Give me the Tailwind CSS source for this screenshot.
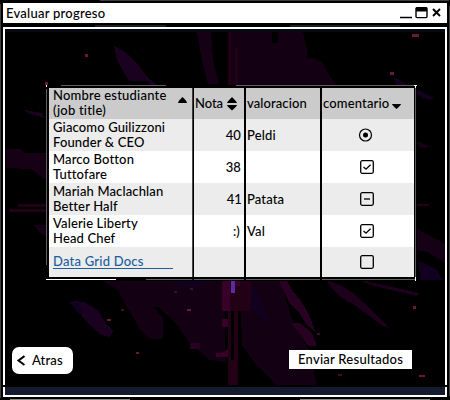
<!DOCTYPE html>
<html lang="es"><head><meta charset="utf-8"><title>Evaluar progreso</title><script src="https://cdn.jsdelivr.net/npm/@tailwindcss/browser@4"></script></head>
<body class="w-[450px] h-[400px] overflow-hidden bg-black text-black font-['Lato','Liberation_Sans',sans-serif] font-medium text-[13px] leading-[15px] tracking-[0.14px]">
<div class="relative w-[450px] h-[400px] pt-[3px] pl-[3px] flex flex-col">
<svg class="absolute inset-0" width="450" height="400" fill="none" stroke="#3c3c3c"><path d="M.5 4V398M100 .5H449M449.5 6V396M95 26H166M290 26H400"/><path d="M10 399.5H130M300 399.5H430" stroke="#888"/></svg>
<header class="w-[444px] h-5 bg-white flex items-center pl-[3px] pr-[4px] shrink-0">
<h1 class="tracking-[0.25px]">Evaluar progreso</h1>
<svg class="ml-auto" width="44" height="16" viewBox="0 0 44 16" fill="none" stroke="#000"><path d="M1 12.5H13" stroke-width="1.5"/><rect x="17" y="2.6" width="11" height="10" rx="1" stroke-width="1.4"/><path d="M17 4.5H28" stroke-width="4"/><path d="M34 4L41 11M41 4L34 11" stroke-width="1.9"/></svg>
</header>
<main class="relative mt-1 w-[444px] h-[370px] border-2 border-white bg-black shrink-0 flex flex-col">
<svg class="absolute inset-0" width="440" height="366" viewBox="5 29 440 366" shape-rendering="crispEdges">
<path fill="#06090f" d="M5 29H445V32H5Z"/>
<path fill="#130012" d="M228 32H272V43H278V32H303L307 50V58H315L323 63L329 75L337 86H228ZM275 53V49H279V53ZM98 278L118 290L126 306L134 318L140 330L150 339H163V318L154 307L158 307L175 322L190 344L210 360L225 362V278ZM240 275H284V293L294 325L309 350L317 386H278L257 366L242 345Z"/>
<path fill="#150015" d="M6 149H21L24 153H48V182L31 169L6 168ZM34 225H48V237L40 233ZM416 141L432 147L420 148ZM416 228L445 244V263L428 252L416 250ZM197 32H211L213 60L219 84H208L203 66Z"/>
<path fill="#1b0120" d="M114 46L127 53L140 67L148 78L158 85H150L147 81H129L117 60ZM69 303L74 301L84 302L98 310L105 322L113 331L110 337L99 334L82 316ZM25 110L42 113L45 118L27 113Z"/>
<path fill="#11001f" d="M165 278H203V286H180ZM251 285L260 298L271 326L252 309ZM69 302L78 303L84 312L79 314ZM419 261L436 269L443 280H420Z"/>
<path fill="#280022" d="M279 281L287 281L293 291L301 301L308 313L313 325L316 332L307 325L300 314L290 304ZM291 323H300L312 333L317 346H308L301 336ZM340 296L348 292L355 300L348 302ZM190 343H200V349H190Z"/>
<path fill="#1d001c" d="M325 279L340 285L353 293L372 310L389 328L383 326L356 306L339 296L331 287ZM356 279L384 285L419 293L416 296L371 285Z"/>
<path fill="#160020" d="M394 77L409 85L424 93L434 98L429 100L397 86Z"/>
<path fill="#220015" d="M228 32H231V86H228ZM235 48H238V86H235ZM225 280H251V311H225ZM228 305H231V386H228ZM234 305H238V386H234ZM228 360H238V386H228ZM18 204H48V207H18ZM9 209H48V212H9ZM416 204H429V206H416Z"/>
<path fill="#380028" d="M222 280H230V311H222ZM222 319H228V327H222ZM216 353H222L228 349V357H216ZM234 280H240V286H234Z"/>
<path fill="#582ba0" d="M231 280H235V293H231Z"/>
<path fill="#6d163e" d="M85 54H88V57H85ZM412 34H419V37H412ZM390 72H394V75H390ZM45 82H48V85H45ZM107 319H111V321H107ZM136 352H139V354H136ZM187 309H191V311H187ZM413 306H416V309H413ZM419 375H425V377H419Z"/>
<path fill="#3d0c2c" d="M121 309H124V311H121ZM174 291H177V293H174ZM190 288H193V290H190ZM317 333H320V335H317ZM338 374H342V376H338Z"/>
<path fill="#050008" d="M225 331H228V336H225ZM231 335H234V345H231Z"/>
</svg>
<section class="relative mt-[57px] ml-[42px] w-[369px] h-[194px]">
<svg class="absolute -left-px -top-px" width="371" height="196" fill="none"><path fill="#000" d="M0 0H371V196H0Z"/><path d="M.5 4V180M15 .5H120M190 .5H369M369.5 3V193M100 194.5H369" stroke="#777" stroke-width=".8"/><path d="M.5 0V2M0 194.5H70M368 .5H371M369.5 0V3M369.5 192V196" stroke="#fff"/></svg>
<div class="relative pl-[2px] pt-[2px] w-[367px] grid grid-cols-[145px_52px_76px_92px] grid-rows-[31px_32px_32px_32px_32px_30px]">
<div class="bg-[#cbcbcb] pl-1 pr-[7px] flex items-center justify-between"><div class="pb-[2px] tracking-[0.2px]">Nombre estudiante<br>(job title)</div><svg class="mb-1" width="9" height="14"><path d="M0 8Q0 6 4.500 2Q9 6 9 8Z"/></svg></div>
<div class="bg-[#cbcbcb] pl-px flex items-center gap-1"><span class="tracking-[-0.05px]">Nota</span><svg width="10" height="16"><path d="M0 7Q0 6 5 1Q10 6 10 7ZM0 9H10Q10 10 5 14.500Q0 10 0 9Z"/></svg></div>
<div class="bg-[#cbcbcb] pl-px flex items-center tracking-[0.1px]">valoracion</div>
<div class="bg-[#cbcbcb] pl-px flex items-center gap-[3px]"><span class="tracking-[0.15px]">comentario</span><svg width="9" height="14"><path d="M0 7H9Q9 8 4.500 12Q0 8 0 7Z"/></svg></div>

<div class="bg-[#ececec] pl-1 flex items-center">Giacomo Guilizzoni<br>Founder &amp; CEO</div><div class="bg-[#ececec] pr-[5px] flex items-center justify-end">40</div><div class="bg-[#ececec] pl-px flex items-center">Peldi</div>
<div class="bg-[#ececec] pl-[36px] flex items-center"><svg width="16" height="16" fill="none" stroke="#000" stroke-width="1.2"><circle cx="7.500" cy="8" r="6"/><circle cx="7.500" cy="8" r="2.500" fill="#000" stroke="none"/></svg></div>

<div class="bg-white pl-1 flex items-center">Marco Botton<br>Tuttofare</div><div class="bg-white pr-[5px] flex items-center justify-end">38</div><div class="bg-white"></div>
<div class="bg-white pl-[37px] flex items-center"><svg width="16" height="16" fill="none" stroke="#000" stroke-width="1.3"><rect x="1.700" y="1.700" width="12.600" height="12.600" rx="1.500"/><path d="M4.500 8L7 10.200L11.500 5.700"/></svg></div>

<div class="bg-[#ececec] pl-1 flex items-center">Mariah Maclachlan<br>Better Half</div><div class="bg-[#ececec] pr-1 flex items-center justify-end">41</div><div class="bg-[#ececec] pl-px flex items-center">Patata</div>
<div class="bg-[#ececec] pl-[37px] flex items-center"><svg width="16" height="16" fill="none" stroke="#000" stroke-width="1.3"><rect x="1.700" y="1.700" width="12.600" height="12.600" rx="1.500"/><path d="M5 8H11"/></svg></div>

<div class="bg-white pl-1 flex items-center">Valerie Liberty<br>Head Chef</div><div class="bg-white pr-[6px] flex items-center justify-end">:)</div><div class="bg-white pl-px flex items-center">Val</div>
<div class="bg-white pl-[37px] flex items-center"><svg width="16" height="16" fill="none" stroke="#000" stroke-width="1.3"><rect x="1.700" y="1.700" width="12.600" height="12.600" rx="1.500"/><path d="M4.500 8L7 10.200L11.500 5.700"/></svg></div>

<div class="bg-[#ececec] pl-1 flex items-center"><a class="block w-[120px] h-[14px] border-b border-[#1d5f9e] text-[#1d5f9e] leading-[13px] tracking-[0.22px]">Data Grid Docs</a></div><div class="bg-[#ececec]"></div><div class="bg-[#ececec]"></div>
<div class="bg-[#ececec] pl-[37px] flex items-center"><svg width="16" height="16" fill="none" stroke="#000" stroke-width="1.3"><rect x="1.700" y="1.700" width="12.600" height="12.600" rx="1.500"/></svg></div>
</div>
<svg class="absolute left-0 top-0" width="369" height="194"><path d="M145.300 0H147V194H145.300ZM197 0H199V194H197ZM273 0H275V194H273Z"/></svg>
</section>
<div class="relative mt-[67px] pl-[7px] pr-[33px] flex items-start justify-between">
<button class="w-[61px] h-[27px] bg-white rounded-[7px] flex items-center pl-[4px] pb-px gap-[7px]"><svg width="9" height="12" fill="none" stroke="#000" stroke-width="2"><path d="M8.500 2L2.500 6.500L8.500 11"/></svg><span>Atras</span></button>
<button class="w-[123px] h-[19px] mt-[3px] bg-white flex items-center justify-center tracking-[0.25px]">Enviar Resultados</button>
</div>
<footer class="relative mt-auto"><div class="-mx-[2px] h-[2px] bg-black"></div><div class="h-2 bg-[#161a2e]"></div></footer>
</main></div></body></html>
